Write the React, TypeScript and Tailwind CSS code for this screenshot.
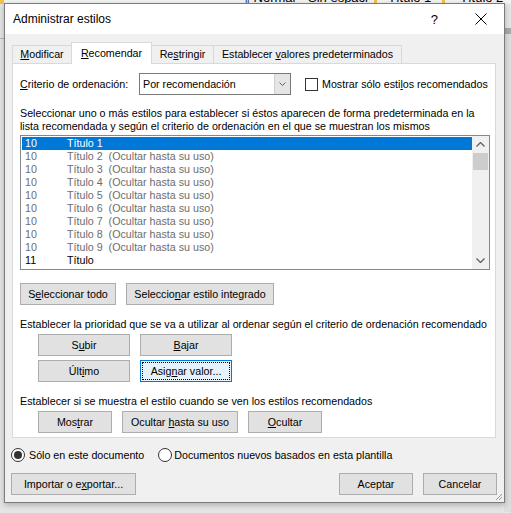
import React from 'react'

const font = { fontFamily: '"Liberation Sans", Arial, sans-serif' }

const rows = [
  { n: '10', name: 'Título 1', extra: '', state: 'sel' },
  { n: '10', name: 'Título 2', extra: '(Ocultar hasta su uso)', state: 'hid' },
  { n: '10', name: 'Título 3', extra: '(Ocultar hasta su uso)', state: 'hid' },
  { n: '10', name: 'Título 4', extra: '(Ocultar hasta su uso)', state: 'hid' },
  { n: '10', name: 'Título 5', extra: '(Ocultar hasta su uso)', state: 'hid' },
  { n: '10', name: 'Título 6', extra: '(Ocultar hasta su uso)', state: 'hid' },
  { n: '10', name: 'Título 7', extra: '(Ocultar hasta su uso)', state: 'hid' },
  { n: '10', name: 'Título 8', extra: '(Ocultar hasta su uso)', state: 'hid' },
  { n: '10', name: 'Título 9', extra: '(Ocultar hasta su uso)', state: 'hid' },
  { n: '11', name: 'Título', extra: '', state: 'vis' },
]

function Btn({ w, children, focus }: { w: string; children: React.ReactNode; focus?: boolean }) {
  if (focus) {
    return (
      <div className={`${w} h-[22px] border border-[#0078d7] bg-[#e5f1fb] p-[1px] flex`}>
        <div className="flex-1 flex items-center justify-center border border-dotted border-black whitespace-nowrap">
          {children}
        </div>
      </div>
    )
  }
  return (
    <div className={`${w} h-[22px] border border-[#adadad] bg-[#e1e1e1] flex items-center justify-center whitespace-nowrap`}>
      {children}
    </div>
  )
}

function Tab({ children, active, w }: { children: React.ReactNode; active?: boolean; w: string }) {
  if (active) {
    return (
      <div className={`${w} h-[22px] -mb-px -ml-px bg-white border border-b-0 border-[#d9d9d9] flex items-center justify-center relative z-10 whitespace-nowrap`}>
        {children}
      </div>
    )
  }
  return (
    <div className={`${w} h-[18px] bg-[#f0f0f0] border border-b-0 border-[#d9d9d9] -ml-px first:ml-0 flex items-center justify-center whitespace-nowrap`}>
      {children}
    </div>
  )
}

export default function App() {
  return (
    <div className="relative w-[511px] h-[513px] overflow-hidden bg-[#e6e6e6] text-[10.7px] leading-[13px] text-black" style={font}>
      {/* Word ribbon behind the dialog */}
      <div className="absolute left-0 top-0 w-[511px] h-[4px] bg-[#f3f3f3] overflow-hidden">
        <div className="absolute left-0 top-0 w-[4px] h-[4px] bg-[#f2c14e]" />
        <span className="absolute left-[243px] top-[-9px] text-[13px] whitespace-nowrap">¶ Normal</span>
        <span className="absolute left-[308px] top-[-9px] text-[13px] whitespace-nowrap">Sin espaci</span>
        <div className="absolute left-[374px] top-0 w-[3px] h-[4px] bg-[#f2c14e]" />
        <span className="absolute left-[388px] top-[-9px] text-[13px] whitespace-nowrap">Título 1</span>
        <div className="absolute left-[442px] top-0 w-[3px] h-[4px] bg-[#f2c14e]" />
        <span className="absolute left-[460px] top-[-9px] text-[13px] whitespace-nowrap">Título 2</span>
      </div>
      <div className="absolute left-0 top-[38px] w-[4px] h-px bg-[#b5b5b5]" />
      <div className="absolute right-0 top-[28px] w-[7px] h-[6px] bg-[#a9a9a9]" />
      <div className="absolute right-0 top-[34px] w-[7px] h-[478px] bg-[#dedede]" />

      {/* Dialog */}
      <div className="absolute left-[4px] top-[3px] w-[501px] h-[500px] border border-[#7b7b7b] bg-[#f0f0f0] flex flex-col shadow-[0_2px_6px_rgba(0,0,0,0.25)]">
        {/* Title bar */}
        <div className="h-[30px] bg-white flex items-center pl-[8px] shrink-0">
          <span className="text-[12px] flex-1 mt-[1px]">Administrar estilos</span>
          <span className="text-[13px] mr-[37px]">?</span>
          <svg width="12" height="12" viewBox="0 0 12 12" className="mr-[17px]">
            <path d="M0.5 0.5 L11.5 11.5 M11.5 0.5 L0.5 11.5" stroke="#000" strokeWidth="1" />
          </svg>
        </div>

        <div className="flex flex-col pl-[7px] pr-[8px] pt-[7px]">
          {/* Tabs */}
          <div className="flex items-end h-[22px]">
            <Tab w="w-[60px]"><span><u>M</u>odificar</span></Tab>
            <Tab active w="w-[81px]"><span><u>R</u>ecomendar</span></Tab>
            <Tab w="w-[63px]"><span>Re<u>s</u>tringir</span></Tab>
            <Tab w="w-[189px]"><span>Establecer <u>v</u>alores predeterminados</span></Tab>
          </div>

          {/* Tab panel */}
          <div className="h-[375px] bg-white border border-[#d9d9d9] pl-[7px] pr-[6px] pt-[9px] flex flex-col">
            <div className="flex items-center h-[22px] whitespace-nowrap">
              <span className="w-[119px]"><u>C</u>riterio de ordenación:</span>
              <div className="w-[152px] h-[22px] border border-[#7a7a7a] bg-white flex">
                <span className="flex-1 flex items-center pl-[3px]">Por recomendación</span>
                <div className="w-[16px] bg-[#e5e5e5] border-l border-[#cfcfcf] flex items-center justify-center">
                  <svg width="7" height="4" viewBox="0 0 7 4">
                    <path d="M0.5 0.5 L3.5 3.5 L6.5 0.5" stroke="#606060" fill="none" strokeWidth="1" />
                  </svg>
                </div>
              </div>
              <div className="ml-[14px] w-[13px] h-[13px] border border-[#333] bg-white" />
              <span className="ml-[4px]">Mostrar sólo esti<u>l</u>os recomendados</span>
            </div>

            <p className="mt-[12px] leading-[13px] whitespace-nowrap">
              Seleccionar uno o más estilos para establecer si éstos aparecen de forma predeterminada en la
              <br />
              lista recomendada y según el criterio de ordenación en el que se muestran los mismos
            </p>

            {/* List */}
            <div className="mt-[2px] w-[470px] h-[135px] border border-[#828790] bg-white flex p-[1px]">
              <div className="flex-1 flex flex-col">
                {rows.map((r, i) => (
                  <div
                    key={i}
                    className={`h-[13px] flex items-center leading-[13px] whitespace-nowrap ${
                      r.state === 'sel' ? 'bg-[#0078d7] text-white' : r.state === 'hid' ? 'text-[#6d6d6d]' : 'text-black'
                    }`}
                  >
                    <span className="w-[45px] pl-[3px]">{r.n}</span>
                    <span className="whitespace-pre">{r.name}{r.extra ? '  ' + r.extra : ''}</span>
                  </div>
                ))}
              </div>
              <div className="w-[17px] -my-[1px] -mr-[1px] bg-[#f0f0f0] flex flex-col items-center">
                <div className="h-[17px] flex items-center justify-center">
                  <svg width="9" height="5" viewBox="0 0 9 5">
                    <path d="M0.5 4.5 L4.5 0.5 L8.5 4.5" stroke="#606060" fill="none" strokeWidth="1.3" />
                  </svg>
                </div>
                <div className="w-[15px] h-[17px] bg-[#cdcdcd]" />
                <div className="flex-1" />
                <div className="h-[17px] flex items-center justify-center">
                  <svg width="9" height="5" viewBox="0 0 9 5">
                    <path d="M0.5 0.5 L4.5 4.5 L8.5 0.5" stroke="#606060" fill="none" strokeWidth="1.3" />
                  </svg>
                </div>
              </div>
            </div>

            <div className="mt-[13px] flex gap-[10px]">
              <Btn w="w-[96px]"><span>S<u>e</u>leccionar todo</span></Btn>
              <Btn w="w-[148px]"><span>Seleccio<u>n</u>ar estilo integrado</span></Btn>
            </div>

            <p className="mt-[13px] whitespace-nowrap">Establecer la prioridad que se va a utilizar al ordenar según el criterio de ordenación recomendado</p>

            <div className="mt-[3px] pl-[18px] flex flex-col gap-[4px]">
              <div className="flex gap-[10px]">
                <Btn w="w-[92px]"><span>S<u>u</u>bir</span></Btn>
                <Btn w="w-[92px]"><span><u>B</u>ajar</span></Btn>
              </div>
              <div className="flex gap-[10px]">
                <Btn w="w-[92px]"><span>Últ<u>i</u>mo</span></Btn>
                <Btn focus w="w-[92px]"><span>Asig<u>n</u>ar valor...</span></Btn>
              </div>
            </div>

            <p className="mt-[13px] whitespace-nowrap">Establecer si se muestra el estilo cuando se ven los estilos recomendados</p>

            <div className="mt-[3px] pl-[18px] flex gap-[10px]">
              <Btn w="w-[74px]"><span>Mos<u>t</u>rar</span></Btn>
              <Btn w="w-[116px]"><span>Ocultar <u>h</u>asta su uso</span></Btn>
              <Btn w="w-[74px]"><span><u>O</u>cultar</span></Btn>
            </div>
          </div>
        </div>

        {/* Radios */}
        <div className="mt-[10px] pl-[6px] flex items-center h-[14px] whitespace-nowrap">
          <div className="w-[14px] h-[14px] rounded-full border border-[#333] bg-white flex items-center justify-center">
            <div className="w-[8px] h-[8px] rounded-full bg-[#333]" />
          </div>
          <span className="ml-[4px]">Sólo en este documento</span>
          <div className="ml-[14px] w-[14px] h-[14px] rounded-full border border-[#333] bg-white" />
          <span className="ml-[2px]">Documentos nuevos basados en esta plantilla</span>
        </div>

        {/* Bottom buttons */}
        <div className="mt-[11px] pl-[6px] pr-[7px] flex">
          <Btn w="w-[125px]"><span>Importar o e<u>x</u>portar...</span></Btn>
          <div className="flex-1" />
          <Btn w="w-[74px]"><span>Aceptar</span></Btn>
          <div className="w-[10px]" />
          <Btn w="w-[74px]"><span>Cancelar</span></Btn>
        </div>

        <svg width="10" height="10" viewBox="0 0 10 10" className="absolute right-[1px] bottom-[1px]">
          <path d="M9 3 L3 9 M9 6 L6 9" stroke="#9a9a9a" strokeWidth="1" />
        </svg>
      </div>
    </div>
  )
}
